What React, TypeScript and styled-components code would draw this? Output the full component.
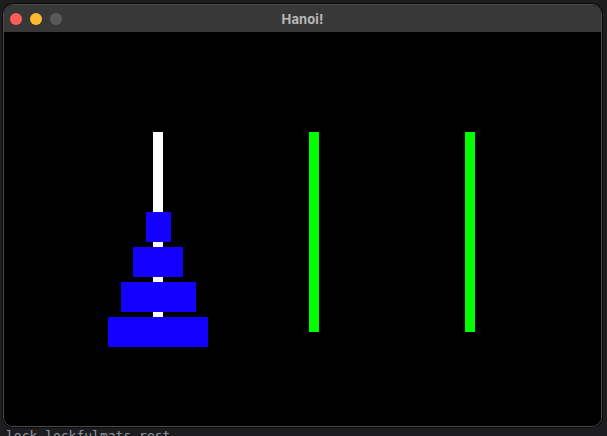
import React from "react";
import styled, { createGlobalStyle } from "styled-components";

const Global = createGlobalStyle`
  html, body {
    margin: 0;
    padding: 0;
    background: #1d1d1f;
    width: 607px;
    height: 436px;
    overflow: hidden;
  }
  #root { width: 607px; height: 436px; }
`;

const Desktop = styled.div`
  width: 607px;
  height: 436px;
  display: flex;
  flex-direction: column;
  overflow: hidden;
  background: #1d1d1f;
`;

const Window = styled.div`
  flex: none;
  margin: 4px 5px 0 3px;
  height: 423px;
  box-sizing: border-box;
  border: 1px solid #4a4a4c;
  border-radius: 10px;
  overflow: hidden;
  display: flex;
  flex-direction: column;
  background: #000;
  box-shadow: 0 0 0 1px #0b0b0b;
`;

const TitleBar = styled.div`
  height: 27px;
  flex: none;
  background: #383838;
  display: grid;
  grid-template-columns: 1fr auto 1fr;
  align-items: center;
  padding: 0 6px;
`;

const Lights = styled.div`
  display: flex;
  gap: 8px;
`;

const Light = styled.span<{ $c: string }>`
  width: 12px;
  height: 12px;
  border-radius: 50%;
  background: ${(p) => p.$c};
`;

const Title = styled.div`
  font-family: Inter, "Liberation Sans", sans-serif;
  font-weight: 700;
  font-size: 13px;
  color: #b8b8b8;
  letter-spacing: 0.1px;
`;

const Board = styled.div`
  flex: 1;
  background: #000;
  display: flex;
  align-items: flex-start;
  padding: 100px 0 0 76px;
`;

const Tower = styled.div`
  width: 156px;
  height: 215px;
  display: grid;
  justify-items: center;
`;

const Peg = styled.div<{ $c: string }>`
  grid-area: 1 / 1;
  align-self: start;
  width: 10px;
  height: 200px;
  background: ${(p) => p.$c};
`;

const Stack = styled.div`
  grid-area: 1 / 1;
  align-self: end;
  display: flex;
  flex-direction: column;
  align-items: center;
  gap: 5px;
`;

const Disk = styled.div<{ $w: number }>`
  width: ${(p) => p.$w}px;
  height: 30px;
  background: #1400ff;
`;

const BehindText = styled.div`
  flex: none;
  margin: 1px 0 0 6px;
  font-family: "DejaVu Sans Mono", "Liberation Mono", monospace;
  font-size: 13px;
  line-height: 16px;
  color: #8f99a3;
  white-space: nowrap;
`;

const towers = [
  { peg: "#ffffff", disks: [25, 50, 75, 100] },
  { peg: "#00ff00", disks: [] as number[] },
  { peg: "#00ff00", disks: [] as number[] },
];

export default function App() {
  return (
    <>
      <Global />
      <Desktop>
        <Window>
          <TitleBar>
            <Lights>
              <Light $c="#fe5f57" />
              <Light $c="#febc2e" />
              <Light $c="#59595b" />
            </Lights>
            <Title>Hanoi!</Title>
            <span />
          </TitleBar>
          <Board>
            {towers.map((t, i) => (
              <Tower key={i}>
                <Peg $c={t.peg} />
                {t.disks.length > 0 && (
                  <Stack>
                    {t.disks.map((w) => (
                      <Disk key={w} $w={w} />
                    ))}
                  </Stack>
                )}
              </Tower>
            ))}
          </Board>
        </Window>
        <BehindText>lock.lockfulmats.rest</BehindText>
      </Desktop>
    </>
  );
}
